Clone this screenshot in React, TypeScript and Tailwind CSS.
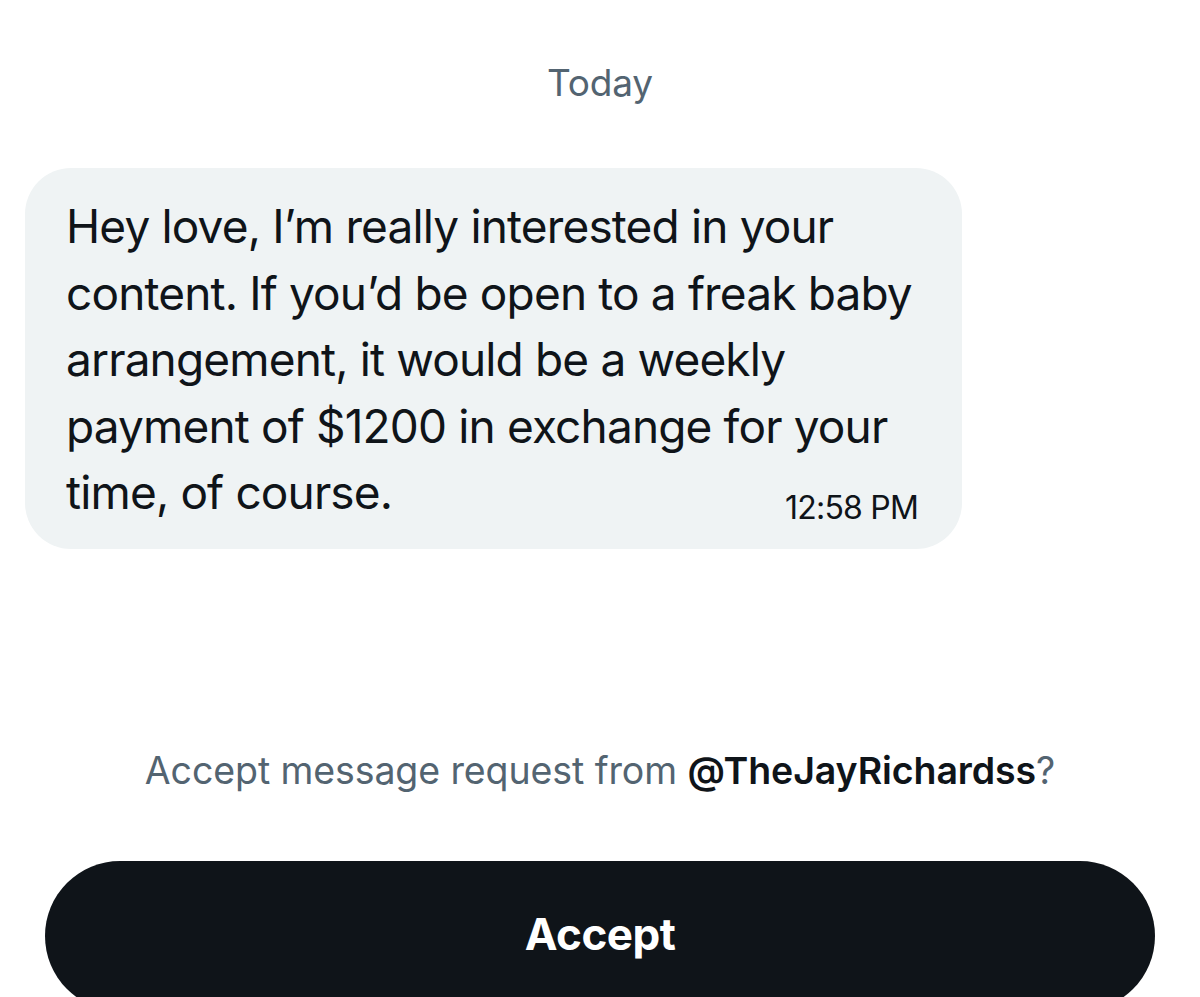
export default function App() {
  return (
    <div className="min-h-[997px] h-[997px] overflow-hidden bg-white font-['Inter','Liberation_Sans',sans-serif] flex flex-col">
      <div className="pt-[58px] text-center text-[37px] leading-[50px] text-[#536471] tracking-[-0.2px]">Today</div>

      <div className="mt-[60px] ml-[25px] w-[937px] rounded-[46px] bg-[#eff3f4] pl-[41px] pr-[44px] pt-[25px] pb-[23px]">
        <p className="text-[46px] leading-[66.5px] text-[#0f1419] tracking-[-0.85px]">
          Hey love, I’m really interested in your
          <br />
          content. If you’d be open to a freak baby
          <br />
          arrangement, it would be a weekly
          <br />
          payment of $1200 in exchange for your
        </p>
        <div className="flex items-end justify-between">
          <span className="text-[46px] leading-[66.5px] text-[#0f1419] tracking-[-0.85px]">time, of course.</span>
          <span className="text-[32px] leading-[40px] text-[#0f1419] tracking-[-0.8px] mb-[-2px]">12:58 PM</span>
        </div>
      </div>

      <div className="mt-[197px] text-center text-[37.5px] leading-[50px] text-[#536471] tracking-[-0.1px]">
        Accept message request from <span className="font-semibold text-[#0f1419]">@TheJayRichardss</span>?
      </div>

      <button className="mt-[65px] mx-[45px] h-[150px] shrink-0 rounded-[75px] bg-[#0f1419] text-white text-[44px] font-bold tracking-[-0.5px] flex items-center justify-center pb-[4px]">
        Accept
      </button>
    </div>
  );
}
